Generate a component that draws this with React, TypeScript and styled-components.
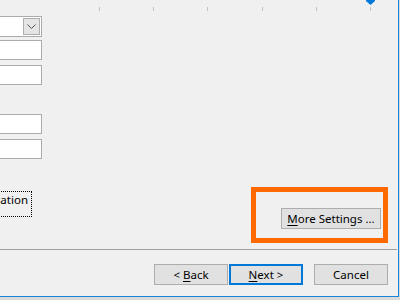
import styled, { createGlobalStyle } from 'styled-components'

const GlobalStyle = createGlobalStyle`
  html, body {
    margin: 0;
    padding: 0;
    background: #dadada;
  }
  body {
    width: 400px;
    height: 300px;
    overflow: hidden;
    font-family: 'Noto Sans', 'Segoe UI', sans-serif;
    font-size: 11.5px;
    color: #000;
  }
`

const Window = styled.div`
  box-sizing: border-box;
  width: 399px;
  height: 297px;
  background: #f0f0f0;
  border-right: 1px solid #1883d7;
  border-bottom: 1px solid #1883d7;
  overflow: hidden;
  display: flex;
  flex-direction: column;
`

const SliderTrack = styled.svg`
  display: block;
  flex: none;
`

const Body = styled.div`
  display: flex;
  height: 233px;
  flex: none;
`

const LeftColumn = styled.div`
  display: flex;
  flex-direction: column;
  width: 142px;
  margin-left: -100px;
  flex: none;
`

const Field = styled.div<{ $gap: number }>`
  box-sizing: border-box;
  height: 20px;
  margin-top: ${(p) => p.$gap}px;
  background: #fff;
  border: 1px solid #ababab;
`

const Combo = styled.div`
  box-sizing: border-box;
  height: 21px;
  background: #fff;
  border: 1px solid #ababab;
  display: flex;
  justify-content: flex-end;
  padding: 1px;
`

const ComboButton = styled.div`
  box-sizing: border-box;
  width: 17px;
  height: 17px;
  background: #e5e5e5;
  border: 1px solid #adadad;
  display: flex;
  align-items: center;
  justify-content: center;
`

const FocusLabel = styled.div`
  align-self: flex-end;
  margin-top: 32px;
  margin-right: 10px;
  box-sizing: border-box;
  height: 26px;
  padding: 0 3px;
  line-height: 16px;
  border: 1px dotted #000;
  white-space: nowrap;
`

const RightArea = styled.div`
  flex: 1;
  display: flex;
  align-items: flex-end;
  justify-content: flex-end;
  padding: 0 10px 6px 0;
`

const Highlight = styled.div`
  box-sizing: border-box;
  width: 137px;
  height: 56px;
  border: 5px solid #ff6a00;
  display: flex;
  align-items: flex-end;
  justify-content: flex-end;
  padding: 0 2px 9px 0;
`

const Button = styled.button<{ $width: number; $default?: boolean }>`
  box-sizing: border-box;
  width: ${(p) => p.$width}px;
  height: 21px;
  margin: 0;
  padding: 0;
  background: #e1e1e1;
  border: ${(p) => (p.$default ? '2px solid #0078d7' : '1px solid #adadad')};
  font-family: inherit;
  font-size: 11.5px;
  line-height: 17px;
  color: #000;
  white-space: nowrap;
  u {
    text-decoration: underline;
    text-underline-offset: 2px;
  }
`

const Separator = styled.div`
  height: 1px;
  margin-right: 1px;
  background: #a0a0a0;
  flex: none;
`

const Footer = styled.div`
  display: flex;
  justify-content: flex-end;
  padding: 14px 10px 0 0;
`

const ButtonGap = styled.div<{ $w: number }>`
  width: ${(p) => p.$w}px;
`

const ticks = [99.5, 153.5, 207.5, 262.5, 316.5, 370.5]

const App = () => {
  return (
    <>
      <GlobalStyle />
      <Window>
        <SliderTrack width="398" height="16" viewBox="0 0 398 16">
          {ticks.map((x) => (
            <line key={x} x1={x} y1="7" x2={x} y2="11" stroke="#c2c2c2" strokeWidth="1" />
          ))}
          <path d="M366 0 H375 V1 L370.5 5 L366 1 Z" fill="#0078d7" />
        </SliderTrack>
        <Body>
          <LeftColumn>
            <Combo>
              <ComboButton>
                <svg width="9" height="5" viewBox="0 0 9 5">
                  <path d="M0.5 0.5 L4.5 4.5 L8.5 0.5" fill="none" stroke="#555" strokeWidth="1" />
                </svg>
              </ComboButton>
            </Combo>
            <Field $gap={3} />
            <Field $gap={5} />
            <Field $gap={29} />
            <Field $gap={5} />
            <FocusLabel>Authentication</FocusLabel>
          </LeftColumn>
          <RightArea>
            <Highlight>
              <Button $width={100}>
                <u>M</u>ore Settings ...
              </Button>
            </Highlight>
          </RightArea>
        </Body>
        <Separator />
        <Footer>
          <Button $width={74}>
            &lt; <u>B</u>ack
          </Button>
          <ButtonGap $w={1} />
          <Button $width={74} $default>
            <u>N</u>ext &gt;
          </Button>
          <ButtonGap $w={11} />
          <Button $width={74}>Cancel</Button>
        </Footer>
      </Window>
    </>
  )
}

export default App
